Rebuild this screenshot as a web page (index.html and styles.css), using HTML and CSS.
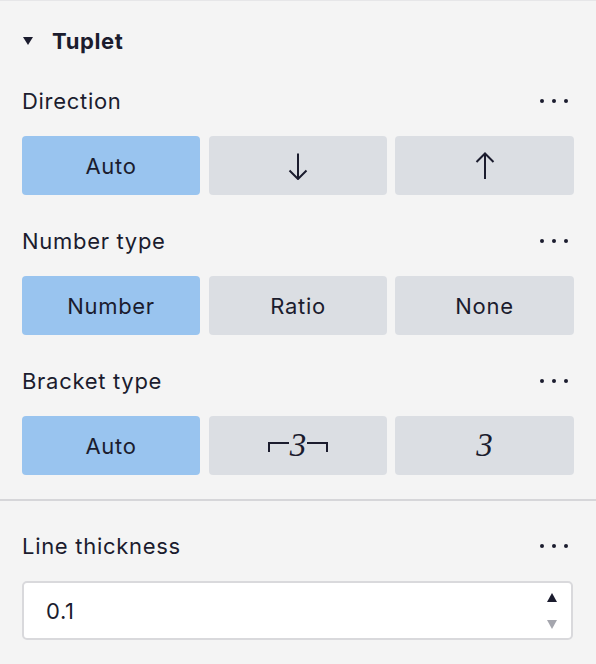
FILE: index.html
```html
<!DOCTYPE html>
<html>
<head>
<meta charset="utf-8">
<link rel="stylesheet" href="styles.css">
</head>
<body>
<div class="panel">
  <section class="section">
    <div class="header">
      <span class="caret"></span>
      <span class="title">Tuplet</span>
    </div>

    <div class="field">
      <div class="label-row">
        <span class="label">Direction</span>
        <span class="more"><i></i><i></i><i></i></span>
      </div>
      <div class="seg">
        <button class="btn active">Auto</button>
        <button class="btn">
          <svg class="arrow" width="20" height="28" viewBox="0 0 20 28"><path d="M10 1.5V27M1.5 18.5L10 27L18.5 18.5" fill="none" stroke="#1b1c2e" stroke-width="2"/></svg>
        </button>
        <button class="btn">
          <svg class="arrow" width="20" height="28" viewBox="0 0 20 28"><path d="M10 27V1.5M1.5 10L10 1.5L18.5 10" fill="none" stroke="#1b1c2e" stroke-width="2"/></svg>
        </button>
      </div>
    </div>

    <div class="field">
      <div class="label-row">
        <span class="label">Number type</span>
        <span class="more"><i></i><i></i><i></i></span>
      </div>
      <div class="seg">
        <button class="btn active">Number</button>
        <button class="btn">Ratio</button>
        <button class="btn">None</button>
      </div>
    </div>

    <div class="field">
      <div class="label-row">
        <span class="label">Bracket type</span>
        <span class="more"><i></i><i></i><i></i></span>
      </div>
      <div class="seg">
        <button class="btn active">Auto</button>
        <button class="btn"><span class="br br-left"></span><span class="math">3</span><span class="br br-right"></span></button>
        <button class="btn"><span class="math">3</span></button>
      </div>
    </div>
  </section>

  <section class="section lower">
    <div class="field">
      <div class="label-row">
        <span class="label">Line thickness</span>
        <span class="more"><i></i><i></i><i></i></span>
      </div>
      <div class="input">
        <span class="value">0.1</span>
        <span class="spinner">
          <span class="tri up"></span>
          <span class="tri down"></span>
        </span>
      </div>
    </div>
  </section>
</div>
</body>
</html>
```

FILE: styles.css
```css
* { box-sizing: border-box; }

html, body {
  margin: 0;
  padding: 0;
  background: #f4f4f4;
}

body {
  font-family: Inter, "Noto Sans", "Liberation Sans", sans-serif;
  color: #1b1c2e;
  width: 596px;
  height: 664px;
  overflow: hidden;
}

.panel {
  border-top: 1px solid #e6e6e8;
}

.section {
  padding: 28px 23px 0 22px;
}

.section.lower {
  border-top: 2px solid #d6d6d9;
  margin-top: 24px;
  padding-top: 33px;
}

.header {
  display: flex;
  align-items: center;
  height: 24px;
}

.caret {
  width: 0;
  height: 0;
  border-left: 5px solid transparent;
  border-right: 5px solid transparent;
  border-top: 8px solid #1b1c2e;
  margin-left: 1px;
  margin-right: 19px;
}

.title {
  font-size: 22px;
  font-weight: 700;
  line-height: 24px;
  letter-spacing: 0.6px;
}

.field {
  margin-top: 36px;
}

.section .field:nth-child(n+3) {
  margin-top: 34px;
}

.lower .field {
  margin-top: 0;
}

.label-row {
  display: flex;
  justify-content: space-between;
  align-items: center;
  height: 24px;
}

.label {
  font-size: 22px;
  line-height: 24px;
  letter-spacing: 0.7px;
}

.more {
  display: flex;
  gap: 8px;
  margin-right: 5px;
}

.more i {
  width: 4px;
  height: 4px;
  border-radius: 50%;
  background: #1b1c2e;
}

.seg {
  display: grid;
  grid-template-columns: 178px 178px 178px;
  column-gap: 9px;
  margin-top: 23px;
}

.seg .btn:last-child {
  margin-left: -1px;
}

.btn {
  height: 59px;
  border: none;
  border-radius: 4px;
  background: #dbdee3;
  font-family: inherit;
  font-size: 22px;
  letter-spacing: 0.7px;
  color: #1b1c2e;
  display: flex;
  align-items: center;
  justify-content: center;
  padding: 0;
}

.btn.active {
  background: #99c4ef;
}

.arrow {
  display: block;
}

.math {
  font-family: "Liberation Serif", "DejaVu Serif", serif;
  font-style: italic;
  font-size: 33px;
  letter-spacing: 0;
  line-height: 1;
}

.br {
  display: inline-block;
  width: 21px;
  height: 10px;
  border-top: 2px solid #1b1c2e;
  margin-top: 2px;
}

.br-left {
  border-left: 2px solid #1b1c2e;
  margin-right: 1px;
}

.br-right {
  border-right: 2px solid #1b1c2e;
  margin-left: 1px;
}

.input {
  margin-top: 23px;
  height: 59px;
  background: #ffffff;
  border: 2px solid #d9d9dc;
  border-radius: 5px;
  display: flex;
  align-items: center;
  justify-content: space-between;
  padding: 0 14px 0 22px;
}

.value {
  font-size: 22px;
  letter-spacing: 0.6px;
}

.spinner {
  display: flex;
  flex-direction: column;
  gap: 18px;
}

.tri {
  width: 0;
  height: 0;
  border-left: 5px solid transparent;
  border-right: 5px solid transparent;
}

.tri.up {
  border-bottom: 9px solid #1b1c2e;
}

.tri.down {
  border-top: 9px solid #a5a6ae;
}
```
